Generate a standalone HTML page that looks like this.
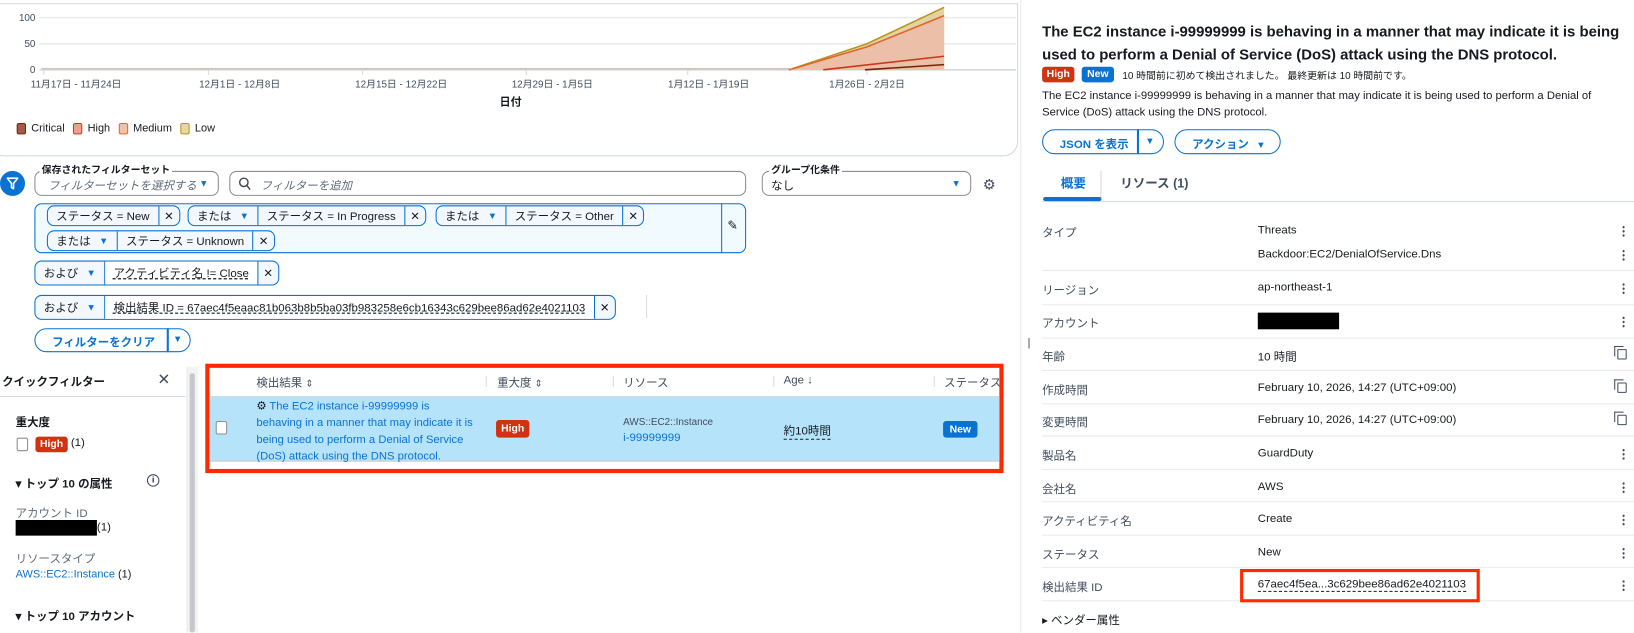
<!DOCTYPE html>
<html><head><meta charset="utf-8"><style>
*{box-sizing:border-box;margin:0;padding:0}
html,body{width:1634px;height:632px;overflow:hidden;background:#fff}
body{font-family:"Liberation Sans","Noto Sans CJK JP",sans-serif;color:#16191f}
#w{position:absolute;left:0;top:0;width:1568px;height:607px;transform:scale(1.04209);transform-origin:0 0;font-size:11.5px}
.a{position:absolute;white-space:nowrap}
.tk{position:absolute;height:20px;border:1px solid #0972d3;border-radius:7px;background:#f2f8fd;display:flex;overflow:hidden}
.tk span{display:flex;align-items:center;padding:0 8px;border-right:1px solid #0972d3;font-size:11px;color:#16191f}
.tk span:last-child{border-right:none}
.x{font-size:14px;padding:0 5px!important}
.tri{color:#0972d3;font-size:9px;margin-left:8px}
.badge{position:absolute;color:#fff;font-size:10px;font-weight:bold;border-radius:3px;display:flex;align-items:center;justify-content:center}
.red{background:#d13212}.blue{background:#0972d3}
.lbl{position:absolute;left:1000px;color:#414d5c;font-size:11px}
.val{position:absolute;left:1207px;font-size:11px}
.hl{position:absolute;left:1000px;width:568px;height:1px;background:#e9ebed}
.keb{position:absolute;left:1557px;width:2px;height:12px;background:radial-gradient(circle,#414d5c 1px,transparent 1.2px) 0 0/2px 4px}
.cp{position:absolute;left:1552px;width:9px;height:10px;border:1.5px solid #414d5c;border-radius:1px}
.cp:before{content:"";position:absolute;left:-4px;top:-4px;width:8px;height:9px;border-left:1.5px solid #414d5c;border-top:1.5px solid #414d5c}
</style></head><body><div id="w">
<div class="a" style="left:-10px;top:3px;width:987px;height:147px;border:1px solid #d5dbdb;border-radius:0 0 14px 14px"></div>
<svg class="a" style="left:0;top:0" width="980" height="110">
<g stroke="#e9ebed" stroke-width="1.5"><line x1="38" y1="17" x2="975" y2="17"/><line x1="38" y1="42" x2="975" y2="42"/></g>
<line x1="38" y1="67" x2="975" y2="67" stroke="#d5dbdb" stroke-width="1.5"/>
<g stroke="#d5dbdb"><line x1="42" y1="67" x2="42" y2="72"/><line x1="200" y1="67" x2="200" y2="72"/><line x1="348" y1="67" x2="348" y2="72"/><line x1="505" y1="67" x2="505" y2="72"/><line x1="660" y1="67" x2="660" y2="72"/><line x1="832" y1="67" x2="832" y2="72"/></g>
<polygon points="757,67 832,42 906,7 906,67" fill="#e2d3a3"/>
<polygon points="757,67 832,45 906,15 906,67" fill="#ecbfa9"/>
<polyline points="757,67 832,42 906,7" fill="none" stroke="#b8961e" stroke-width="1.5"/>
<polyline points="757,67 832,45 906,15" fill="none" stroke="#e0662e" stroke-width="1.5"/>
<polyline points="790,67 906,54" fill="none" stroke="#c33d1b" stroke-width="1.5"/>
<polyline points="830,67 906,62" fill="none" stroke="#7d2105" stroke-width="1.5"/>
<line x1="40" y1="66" x2="760" y2="66" stroke="#c9a9a0" stroke-width="1"/>
<g font-size="9.5" fill="#414d5c" font-family="Liberation Sans,Noto Sans CJK JP,sans-serif">
<text x="34" y="20" text-anchor="end">100</text><text x="34" y="45" text-anchor="end">50</text><text x="34" y="70" text-anchor="end">0</text>
<text x="73" y="84" text-anchor="middle">11月17日 - 11月24日</text>
<text x="230" y="84" text-anchor="middle">12月1日 - 12月8日</text>
<text x="385" y="84" text-anchor="middle">12月15日 - 12月22日</text>
<text x="530" y="84" text-anchor="middle">12月29日 - 1月5日</text>
<text x="680" y="84" text-anchor="middle">1月12日 - 1月19日</text>
<text x="832" y="84" text-anchor="middle">1月26日 - 2月2日</text>
<text x="490" y="101" text-anchor="middle" font-weight="bold" fill="#16191f" font-size="10.5">日付</text>
</g></svg>
<div class="a" style="left:16px;top:117px;font-size:10.5px;display:flex;gap:5px;align-items:center;color:#16191f">
<i style="width:9px;height:11px;background:#a35a4c;border:1px solid #7d2105;border-radius:2px"></i>Critical
<i style="width:9px;height:11px;background:#eea08f;border:1px solid #c33d1b;border-radius:2px;margin-left:3px"></i>High
<i style="width:9px;height:11px;background:#f5c0a6;border:1px solid #e0662e;border-radius:2px;margin-left:3px"></i>Medium
<i style="width:9px;height:11px;background:#e8d89c;border:1px solid #b8961e;border-radius:2px;margin-left:3px"></i>Low</div>

<div class="a" style="left:0;top:164px;width:24px;height:24px;border-radius:50%;background:#0972d3"></div>
<svg class="a" style="left:5px;top:169px" width="14" height="14"><path d="M2 2h10l-4 5v5l-2-1V7z" fill="none" stroke="#fff" stroke-width="1.5" stroke-linejoin="round"/></svg>
<div class="a" style="left:33px;top:164px;width:177px;height:24px;border:1px solid #8c8c94;border-radius:7px;font-size:11px;color:#5f6b7a;font-style:italic;padding:5px 0 0 12px">フィルターセットを選択する<span style="color:#0972d3;font-style:normal;font-size:9px;position:absolute;right:9px;top:6px">▼</span></div>
<div class="a" style="left:38px;top:155px;font-size:9.5px;font-weight:bold;background:#fff;padding:0 2px">保存されたフィルターセット</div>
<div class="a" style="left:220px;top:164px;width:496px;height:24px;border:1px solid #8c8c94;border-radius:7px;font-size:11px;color:#5f6b7a;font-style:italic;padding:5px 0 0 29px">フィルターを追加</div>
<svg class="a" style="left:229px;top:170px" width="12" height="13"><circle cx="5" cy="5" r="4" fill="none" stroke="#414d5c" stroke-width="1.4"/><line x1="8" y1="8" x2="11" y2="12" stroke="#414d5c" stroke-width="1.4"/></svg>
<div class="a" style="left:731px;top:164px;width:201px;height:24px;border:1px solid #8c8c94;border-radius:7px;font-size:11px;padding:5px 0 0 8px">なし<span style="color:#0972d3;font-size:9px;position:absolute;right:9px;top:6px">▼</span></div>
<div class="a" style="left:738px;top:155px;font-size:9.5px;font-weight:bold;background:#fff;padding:0 2px">グループ化条件</div>
<div class="a" style="left:943px;top:169px;font-size:14px;color:#414d5c">⚙</div>

<div class="a" style="left:33px;top:195px;width:683px;height:48px;border:1px solid #0972d3;border-radius:7px;background:#f1faff"></div>
<div class="a" style="left:692px;top:195px;width:1px;height:48px;background:#0972d3"></div>
<div class="a" style="left:698px;top:209px;font-size:12px;color:#16191f">✎</div>
<div class="tk" style="left:45px;top:197px"><span>ステータス = New</span><span class="x">✕</span></div>
<div class="tk" style="left:180px;top:197px"><span>または<b class="tri">▼</b></span><span>ステータス = In Progress</span><span class="x">✕</span></div>
<div class="tk" style="left:418px;top:197px"><span>または<b class="tri">▼</b></span><span>ステータス = Other</span><span class="x">✕</span></div>
<div class="tk" style="left:45px;top:221px"><span>または<b class="tri">▼</b></span><span>ステータス = Unknown</span><span class="x">✕</span></div>
<div class="tk" style="left:33px;top:250px;height:24px"><span>および<b class="tri">▼</b></span><span style="background:#fff"><u style="text-decoration:underline dashed">アクティビティ名 != Close</u></span><span class="x">✕</span></div>
<div class="tk" style="left:33px;top:283px;height:24px"><span>および<b class="tri">▼</b></span><span style="background:#fff"><u style="text-decoration:underline dashed">検出結果 ID = 67aec4f5eaac81b063b8b5ba03fb983258e6cb16343c629bee86ad62e4021103</u></span><span class="x">✕</span></div>
<div class="a" style="left:620px;top:283px;width:1px;height:22px;background:#d5dbdb"></div>
<div class="a" style="left:33px;top:315px;width:150px;height:23px;border:1.5px solid #0972d3;border-radius:12px;color:#0972d3;font-weight:bold;font-size:11px;padding:4px 0 0 16px">フィルターをクリア</div>
<div class="a" style="left:160px;top:315px;width:1.5px;height:23px;background:#0972d3"></div>
<div class="a" style="left:166px;top:320px;color:#0972d3;font-size:9px">▼</div>

<div class="a" style="left:2px;top:358px;font-weight:bold;font-size:11px">クイックフィルター</div>
<div class="a" style="left:151px;top:355px;font-size:15px;color:#414d5c">✕</div>
<div class="a" style="left:0;top:380px;width:178px;height:1px;background:#d5dbdb"></div>
<div class="a" style="left:15px;top:397px;font-weight:bold;font-size:11px">重大度</div>
<div class="a" style="left:16px;top:420px;width:11px;height:13px;border:1px solid #8c8c94;border-radius:2px"></div>
<div class="badge red" style="left:34px;top:419px;width:31px;height:15px">High</div>
<div class="a" style="left:68px;top:419px;font-size:11px">(1)</div>
<div class="a" style="left:15px;top:456px;font-weight:bold;font-size:11px">▾ トップ 10 の属性</div>
<div class="a" style="left:141px;top:455px;width:12px;height:12px;border:1.3px solid #414d5c;border-radius:50%;font-size:8px;text-align:center;line-height:10px;font-weight:bold">i</div>
<div class="a" style="left:15px;top:484px;color:#5f6b7a;font-size:11px">アカウント ID</div>
<div class="a" style="left:15px;top:499px;width:78px;height:15px;background:#000"></div>
<div class="a" style="left:93px;top:500px;font-size:11px">(1)</div>
<div class="a" style="left:15px;top:528px;color:#5f6b7a;font-size:11px">リソースタイプ</div>
<div class="a" style="left:15px;top:545px;font-size:10.5px"><span style="color:#0972d3">AWS::EC2::Instance</span> (1)</div>
<div class="a" style="left:15px;top:583px;font-weight:bold;font-size:11px">▾ トップ 10 アカウント</div>
<div class="a" style="left:179px;top:352px;width:11px;height:255px;background:#f2f3f3;border-left:1px solid #e9ebed"></div>
<div class="a" style="left:182px;top:358px;width:5px;height:249px;background:#c6c6cd;border-radius:3px"></div>

<div class="a" style="left:197px;top:349px;width:766px;height:105px;border:4px solid #ff2a00"></div>
<div class="a" style="left:201px;top:380px;width:758px;height:1px;background:#d5dbdb"></div>
<div class="a" style="left:201px;top:381px;width:758px;height:61px;background:#b5e3fa"></div>
<div class="a" style="left:201px;top:442px;width:758px;height:1px;background:#c6c6cd"></div>
<div class="a" style="left:246px;top:359px;font-size:11px;color:#414d5c">検出結果 <span style="font-size:9px">⇕</span></div>
<div class="a" style="left:465px;top:360px;color:#d5dbdb">|</div>
<div class="a" style="left:477px;top:359px;font-size:11px;color:#414d5c">重大度 <span style="font-size:9px">⇕</span></div>
<div class="a" style="left:587px;top:360px;color:#d5dbdb">|</div>
<div class="a" style="left:598px;top:359px;font-size:11px;color:#414d5c">リソース</div>
<div class="a" style="left:741px;top:360px;color:#d5dbdb">|</div>
<div class="a" style="left:752px;top:359px;font-size:11px;color:#414d5c">Age ↓</div>
<div class="a" style="left:895px;top:360px;color:#d5dbdb">|</div>
<div class="a" style="left:906px;top:359px;font-size:11px;color:#414d5c;width:53px;overflow:hidden">ステータス</div>
<div class="a" style="left:207px;top:404px;width:11px;height:13px;border:1px solid #8c8c94;border-radius:2px;background:#fff"></div>
<div class="a" style="left:246px;top:382px;font-size:10.8px;line-height:16px;color:#0972d3"><span style="color:#16191f">⚙</span> The EC2 instance i-99999999 is<br>behaving in a manner that may indicate it is<br>being used to perform a Denial of Service<br>(DoS) attack using the DNS protocol.</div>
<div class="badge red" style="left:476px;top:403px;width:32px;height:17px">High</div>
<div class="a" style="left:598px;top:400px;font-size:9.5px;color:#414d5c">AWS::EC2::Instance</div>
<div class="a" style="left:598px;top:414px;font-size:11px;color:#0972d3">i-99999999</div>
<div class="a" style="left:752px;top:405px;font-size:11px;border-bottom:1px dashed #16191f">約10時間</div>
<div class="badge blue" style="left:905px;top:404px;width:33px;height:16px">New</div>

<div class="a" style="left:979px;top:0;width:1px;height:607px;background:#e9ebed"></div>
<div class="a" style="left:986px;top:323px;font-size:11px;color:#414d5c">|</div>
<div class="a" style="left:1000px;top:20px;font-size:14.3px;font-weight:bold;line-height:22px;white-space:normal;width:560px">The EC2 instance i-99999999 is behaving in a manner that may indicate it is being used to perform a Denial of Service (DoS) attack using the DNS protocol.</div>
<div class="a" style="left:1614px;top:18px;font-size:14px;color:#414d5c">✕</div>
<div class="badge red" style="left:1000px;top:64px;width:31px;height:15px">High</div>
<div class="badge blue" style="left:1038px;top:64px;width:31px;height:15px">New</div>
<div class="a" style="left:1077px;top:65px;font-size:9.5px;color:#16191f">10 時間前に初めて検出されました。 最終更新は 10 時間前です。</div>
<div class="a" style="left:1000px;top:84px;font-size:10.8px;line-height:16px;white-space:normal;width:560px">The EC2 instance i-99999999 is behaving in a manner that may indicate it is being used to perform a Denial of Service (DoS) attack using the DNS protocol.</div>
<div class="a" style="left:1000px;top:124px;width:117px;height:24px;border:1.5px solid #0972d3;border-radius:12px;color:#0972d3;font-weight:bold;font-size:11px;padding:5px 0 0 16px">JSON を表示</div>
<div class="a" style="left:1091px;top:124px;width:1.5px;height:24px;background:#0972d3"></div>
<div class="a" style="left:1099px;top:130px;color:#0972d3;font-size:9px">▼</div>
<div class="a" style="left:1127px;top:124px;width:102px;height:24px;border:1.5px solid #0972d3;border-radius:12px;color:#0972d3;font-weight:bold;font-size:11px;padding:5px 0 0 16px">アクション <span style="font-size:9px;margin-left:4px">▼</span></div>
<div class="a" style="left:1018px;top:167px;color:#0972d3;font-weight:bold;font-size:12px">概要</div>
<div class="a" style="left:1056px;top:164px;width:1px;height:26px;background:#d5dbdb"></div>
<div class="a" style="left:1075px;top:167px;font-size:12px;font-weight:bold;color:#414d5c">リソース (1)</div>
<div class="a" style="left:1000px;top:193px;width:568px;height:1px;background:#d5dbdb"></div>
<div class="a" style="left:1001px;top:189px;width:56px;height:4px;background:#0972d3;border-radius:2px"></div>

<div class="lbl" style="top:215px">タイプ</div><div class="val" style="top:215px">Threats</div><div class="keb" style="top:216px"></div>
<div class="val" style="top:238px">Backdoor:EC2/DenialOfService.Dns</div><div class="keb" style="top:239px"></div>
<div class="hl" style="top:259px"></div>
<div class="lbl" style="top:270px">リージョン</div><div class="val" style="top:270px">ap-northeast-1</div><div class="keb" style="top:271px"></div>
<div class="hl" style="top:292px"></div>
<div class="lbl" style="top:302px">アカウント</div><div class="a" style="left:1207px;top:300px;width:78px;height:16px;background:#000"></div><div class="keb" style="top:303px"></div>
<div class="hl" style="top:324px"></div>
<div class="lbl" style="top:334px">年齢</div><div class="val" style="top:334px">10 時間</div><div class="cp" style="top:335px"></div>
<div class="hl" style="top:355px"></div>
<div class="lbl" style="top:366px">作成時間</div><div class="val" style="top:366px">February 10, 2026, 14:27 (UTC+09:00)</div><div class="cp" style="top:367px"></div>
<div class="hl" style="top:387px"></div>
<div class="lbl" style="top:397px">変更時間</div><div class="val" style="top:397px">February 10, 2026, 14:27 (UTC+09:00)</div><div class="cp" style="top:398px"></div>
<div class="hl" style="top:418px"></div>
<div class="lbl" style="top:429px">製品名</div><div class="val" style="top:429px">GuardDuty</div><div class="keb" style="top:430px"></div>
<div class="hl" style="top:450px"></div>
<div class="lbl" style="top:461px">会社名</div><div class="val" style="top:461px">AWS</div><div class="keb" style="top:462px"></div>
<div class="hl" style="top:481px"></div>
<div class="lbl" style="top:492px">アクティビティ名</div><div class="val" style="top:492px">Create</div><div class="keb" style="top:493px"></div>
<div class="hl" style="top:513px"></div>
<div class="lbl" style="top:524px">ステータス</div><div class="val" style="top:524px">New</div><div class="keb" style="top:525px"></div>
<div class="hl" style="top:544px"></div>
<div class="lbl" style="top:555px">検出結果 ID</div><div class="val" style="top:555px;border-bottom:1px dashed #16191f">67aec4f5ea...3c629bee86ad62e4021103</div><div class="keb" style="top:556px"></div>
<div class="hl" style="top:576px"></div>
<div class="a" style="left:1190px;top:546px;width:230px;height:32px;border:3px solid #ff2a00"></div>
<div class="lbl" style="top:587px;color:#16191f">▸ ベンダー属性</div>
</div></body></html>
